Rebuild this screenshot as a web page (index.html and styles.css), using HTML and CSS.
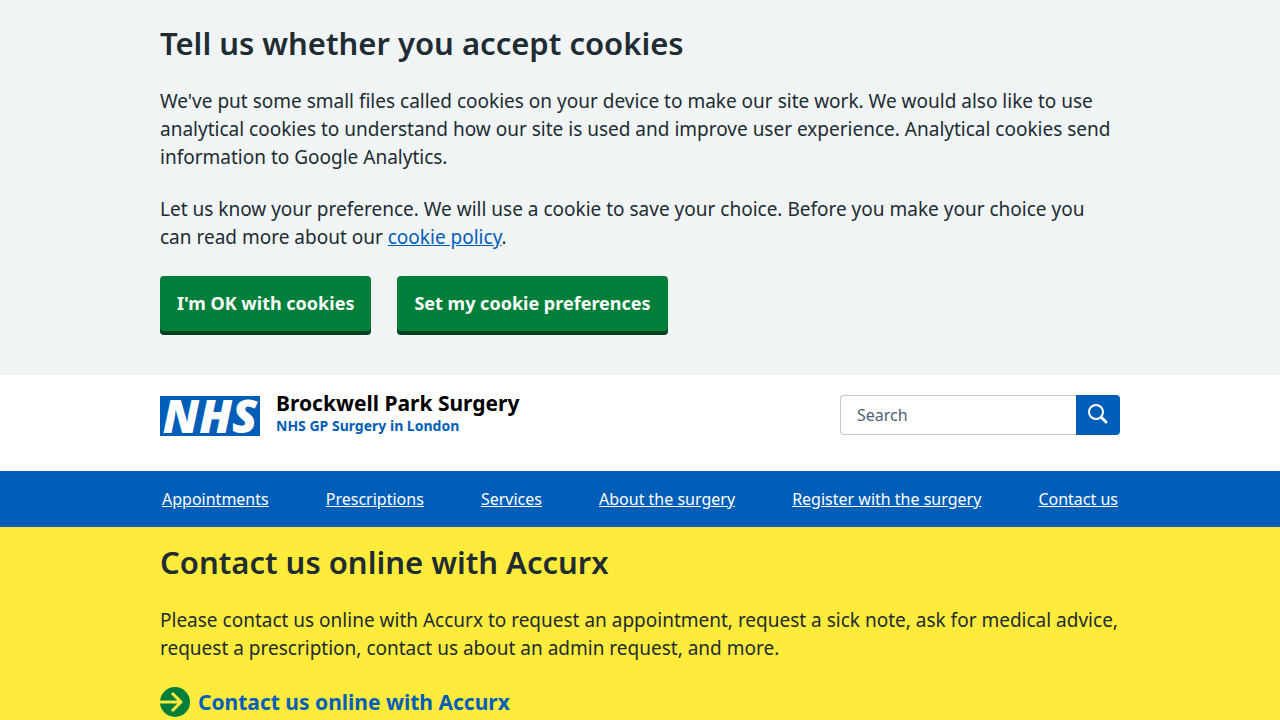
FILE: index.html
```html
<!DOCTYPE html>
<html lang="en">
<head>
<meta charset="utf-8">
<meta name="viewport" content="width=device-width, initial-scale=1">
<title>Brockwell Park Surgery</title>
<link rel="stylesheet" href="styles.css">
</head>
<body>
<section class="cookie-banner" aria-labelledby="cookie-title">
  <div class="container">
    <h2 class="heading" id="cookie-title">Tell us whether you accept cookies</h2>
    <p class="text">We've put some small files called cookies on your device to make our site work. We would also like to use analytical cookies to understand how our site is used and improve user experience. Analytical cookies send information to Google Analytics.</p>
    <p class="text">Let us know your preference. We will use a cookie to save your choice. Before you make your choice you can&nbsp;read more about our <a class="link" href="#">cookie policy</a>.</p>
    <div class="buttons">
      <button class="button" type="button">I'm OK with cookies</button>
      <button class="button" type="button">Set my cookie preferences</button>
    </div>
  </div>
</section>
<header>
  <div class="container masthead">
    <a class="brand" href="#">
      <svg class="logo" viewBox="0 0 100 40" width="100" height="40" role="img" aria-label="NHS logo">
        <rect width="100" height="40" fill="#005eb8"/>
        <text class="logo-text" x="50" y="37" text-anchor="middle">NHS</text>
      </svg>
      <span class="brand-text">
        <span class="brand-name">Brockwell Park Surgery</span>
        <span class="brand-sub">NHS GP Surgery in London</span>
      </span>
    </a>
    <form class="search" role="search">
      <input class="search-input" type="search" placeholder="Search" aria-label="Search">
      <button class="search-button" type="submit" aria-label="Search">
        <svg viewBox="0 0 24 24" width="24" height="24" fill="none" stroke="#fff" stroke-width="2" stroke-linecap="round" aria-hidden="true">
          <circle cx="10" cy="10" r="7"/>
          <path d="M15.500 15.500L20 20" stroke-width="3"/>
        </svg>
      </button>
    </form>
  </div>
  <nav class="nav" aria-label="Primary">
    <ul class="container nav-list">
      <li><a class="nav-link" href="#">Appointments</a></li>
      <li><a class="nav-link" href="#">Prescriptions</a></li>
      <li><a class="nav-link" href="#">Services</a></li>
      <li><a class="nav-link" href="#">About the surgery</a></li>
      <li><a class="nav-link" href="#">Register with the surgery</a></li>
      <li><a class="nav-link" href="#">Contact us</a></li>
    </ul>
  </nav>
</header>
<main class="notice">
  <div class="container">
    <h2 class="heading">Contact us online with Accurx</h2>
    <p class="text">Please contact us online with Accurx to request an appointment, request a sick note, ask for medical advice, request a prescription, contact us about an admin request, and more.</p>
    <a class="action" href="#">
      <svg viewBox="0 0 30 30" width="30" height="30" fill="none" stroke="#ffeb3b" stroke-width="3" stroke-linejoin="round" aria-hidden="true">
        <circle cx="15" cy="15" r="15" fill="#007f3b" stroke="none"/>
        <path d="M0 15H21M12 6L21 15L12 24"/>
      </svg>
      <span>Contact us online with Accurx</span>
    </a>
  </div>
</main>
</body>
</html>
```
FILE: styles.css
```css
* { box-sizing: border-box; }
body {
  margin: 0;
  background: #fff;
  color: #212b32;
  font-family: "Noto Sans", "Open Sans", sans-serif;
  overflow-x: hidden;
}
.container { max-width: 960px; margin: 0 auto; }
.cookie-banner { background: #f0f4f5; padding: 23px 0 36px; }
.heading { margin: 0 0 24px; font-size: 31px; line-height: 40px; font-weight: 600; }
.text { margin: 0 0 24px; font-size: 19px; line-height: 28px; }
.link { color: #005eb8; }
.buttons { display: flex; gap: 26px; padding-top: 1px; }
.button {
  border: 0;
  border-radius: 4px;
  background: #007f3b;
  box-shadow: 0 4px 0 #00401e;
  color: #fff;
  font: 700 18px/28px "Noto Sans", "Open Sans", sans-serif;
  padding: 13px 17px 14px;
  margin-bottom: 8px;
}
.masthead {
  display: flex;
  justify-content: space-between;
  align-items: flex-start;
  padding: 20px 0 35px;
}
.brand { display: flex; gap: 16px; color: #000; text-decoration: none; }
.logo { margin-top: 1px; }
.logo-text { fill: #fff; font: italic 900 46px "Noto Sans", "Open Sans", sans-serif; }
.brand-text { display: flex; flex-direction: column; font-weight: 700; }
.brand-name { font-size: 21px; line-height: 16px; padding-bottom: 6px; }
.brand-sub { color: #005eb8; font-size: 14px; line-height: 18px; }
.search { display: flex; width: 280px; height: 40px; }
.search-input {
  flex: 1;
  min-width: 0;
  border: 1px solid #c4c8cb;
  border-right: 0;
  border-radius: 4px 0 0 4px;
  padding: 0 16px;
  background: #fff;
  color: #212b32;
  font: 16px/24px "Noto Sans", "Open Sans", sans-serif;
}
.search-input::placeholder { color: #4c6272; opacity: 1; }
.search-button {
  display: flex;
  justify-content: center;
  width: 44px;
  padding: 7px 0 0;
  border: 0;
  border-radius: 0 4px 4px 0;
  background: #005eb8;
}
.nav { background: #005eb8; }
.nav-list {
  display: flex;
  justify-content: space-between;
  list-style: none;
  padding: 16px 2px;
}
.nav-link { color: #fff; font-size: 16px; line-height: 24px; }
.notice { background: #ffeb3b; padding: 15px 0 32px; }
.action {
  display: flex;
  align-items: center;
  gap: 8px;
  color: #005eb8;
  font-size: 21px;
  line-height: 32px;
  font-weight: 700;
  text-decoration: none;
}
```
